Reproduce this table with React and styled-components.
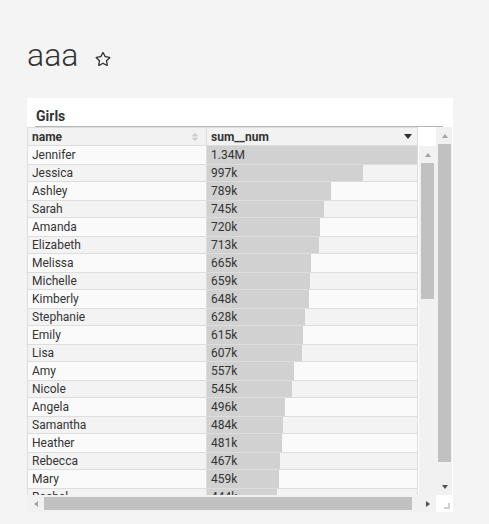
import React from 'react';
import styled, { createGlobalStyle } from 'styled-components';
import { FaRegStar, FaSort } from 'react-icons/fa';

const GlobalStyle = createGlobalStyle`
  body {
    margin: 0;
    background: #f4f4f4;
    font-family: Roboto, "Liberation Sans", sans-serif;
    color: #333;
  }
  * { box-sizing: border-box; }
`;

const Page = styled.div`
  padding: 39px 0 12px 27px;
`;

const TitleRow = styled.div`
  display: flex;
  align-items: center;
  gap: 17px;
  height: 32px;
`;

const Title = styled.h1`
  margin: 0;
  font-size: 32px;
  font-weight: 300;
  line-height: 32px;
  color: #333;
`;

const StarButton = styled.span`
  display: flex;
  margin-top: 8px;
  color: #333;
`;

const Panel = styled.div`
  margin-top: 27px;
  width: 426px;
  background: #fff;
`;

const PanelHeader = styled.div`
  margin: 0 10px 0 8px;
  padding: 10px 0 2px 1px;
  font-size: 14px;
  font-weight: 700;
  line-height: 16px;
  border-bottom: 1px solid #b5b5b5;
`;

const Grid = styled.div`
  display: grid;
  grid-template-columns: 409px 16px;
  grid-template-rows: 368px 17px;
`;

const Content = styled.div`
  display: flex;
  flex-direction: column;
  overflow: hidden;
`;

const HeaderRow = styled.div`
  display: flex;
  height: 19px;
  flex: none;
`;

const HeadCell = styled.div`
  width: ${p => p.$width}px;
  display: flex;
  align-items: center;
  justify-content: space-between;
  padding: 0 6px 0 4px;
  background: #f2f2f2;
  border: 1px solid #ddd;
  border-left-width: ${p => (p.$first ? 1 : 0)}px;
  font-size: 12px;
  font-weight: 700;
  line-height: 16px;
`;

const SortIcon = styled(FaSort)`
  color: #ccc;
  font-size: 10px;
`;

const DropArrow = styled.span`
  width: 0;
  height: 0;
  margin-right: -1px;
  border-left: 4px solid transparent;
  border-right: 4px solid transparent;
  border-top: 5px solid #333;
`;

const Body = styled.div`
  flex: 1;
  display: flex;
  overflow: hidden;
`;

const Rows = styled.div`
  width: 392px;
  display: flex;
  flex-direction: column;
`;

const Row = styled.div`
  display: flex;
  width: 391px;
  height: 18px;
  flex: none;
  background: ${p => (p.$boxed ? '#f3f3f3' : '#fafafa')};
  border-top: ${p => (p.$boxed ? '1px solid #ddd' : 'none')};
  border-bottom: ${p => (p.$boxed ? '1px solid #ddd' : 'none')};
`;

const NameCell = styled.div`
  width: 180px;
  padding-left: 4px;
  border-left: 1px solid #ddd;
  border-right: 1px solid #ddd;
  font-size: 12px;
  line-height: 16px;
  display: flex;
  align-items: center;
`;

const ValueCell = styled.div`
  flex: 1;
  position: relative;
  border-right: 1px solid #ddd;
  display: flex;
  align-items: center;
`;

const Bar = styled.div`
  position: absolute;
  left: 0;
  top: 0;
  bottom: 0;
  background: #d1d1d1;
`;

const Value = styled.span`
  position: relative;
  padding-left: 4px;
  font-size: 12px;
  line-height: 16px;
`;

const VTrack = styled.div`
  width: ${p => p.$width}px;
  display: flex;
  flex-direction: column;
  background: #f1f1f1;
  padding: 0 ${p => p.$padRight}px 0 2px;
`;

const HTrack = styled.div`
  display: flex;
  background: #f1f1f1;
  padding: 2px 0;
`;

const ArrowBox = styled.div`
  flex: none;
  width: ${p => (p.$horizontal ? '17px' : 'auto')};
  height: ${p => (p.$horizontal ? 'auto' : '17px')};
  display: flex;
  align-items: center;
  justify-content: center;
`;

const Tri = styled.span`
  width: 0;
  height: 0;
  ${p => {
    const c = p.$active ? '#505050' : '#a3a3a3';
    if (p.$dir === 'up') return `border-left: 3.5px solid transparent; border-right: 3.5px solid transparent; border-bottom: 4px solid ${c};`;
    if (p.$dir === 'down') return `border-left: 3.5px solid transparent; border-right: 3.5px solid transparent; border-top: 4px solid ${c};`;
    if (p.$dir === 'left') return `border-top: 3.5px solid transparent; border-bottom: 3.5px solid transparent; border-right: 4px solid ${c};`;
    return `border-top: 3.5px solid transparent; border-bottom: 3.5px solid transparent; border-left: 4px solid ${c};`;
  }}
`;

const VThumb = styled.div`
  height: ${p => p.$size}px;
  flex: none;
  background: #c1c1c1;
`;

const HThumb = styled.div`
  width: ${p => p.$size}px;
  flex: none;
  background: #c1c1c1;
`;

const Spacer = styled.div`
  flex: 1;
`;

const Corner = styled.div`
  background: #fff;
  display: flex;
  align-items: flex-end;
  justify-content: flex-end;
  padding: 0 2px 3px 0;
`;

const Grip = styled.span`
  width: 6px;
  height: 6px;
  border-right: 2px solid #d0d0d0;
  border-bottom: 2px solid #d0d0d0;
`;

const girls = [
  ['Jennifer', 1340, '1.34M'],
  ['Jessica', 997],
  ['Ashley', 789],
  ['Sarah', 745],
  ['Amanda', 720],
  ['Elizabeth', 713],
  ['Melissa', 665],
  ['Michelle', 659],
  ['Kimberly', 648],
  ['Stephanie', 628],
  ['Emily', 615],
  ['Lisa', 607],
  ['Amy', 557],
  ['Nicole', 545],
  ['Angela', 496],
  ['Samantha', 484],
  ['Heather', 481],
  ['Rebecca', 467],
  ['Mary', 459],
  ['Rachel', 444],
];

const max = 1340;

export default function App() {
  return (
    <Page>
      <GlobalStyle />
      <TitleRow>
        <Title>aaa</Title>
        <StarButton><FaRegStar size={16} /></StarButton>
      </TitleRow>
      <Panel>
        <PanelHeader>Girls</PanelHeader>
        <Grid>
          <Content>
            <HeaderRow>
              <HeadCell $width={180} $first>name <SortIcon /></HeadCell>
              <HeadCell $width={211}>sum__num <DropArrow /></HeadCell>
            </HeaderRow>
            <Body>
              <Rows>
                {girls.map(([name, v, label], i) => (
                  <Row key={name} $boxed={i % 2 === 1}>
                    <NameCell>{name}</NameCell>
                    <ValueCell>
                      <Bar style={{ width: `${(v / max) * 100}%` }} />
                      <Value>{label || `${v}k`}</Value>
                    </ValueCell>
                  </Row>
                ))}
              </Rows>
              <VTrack $width={17} $padRight={2}>
                <ArrowBox><Tri $dir="up" /></ArrowBox>
                <VThumb $size={136} />
              </VTrack>
            </Body>
          </Content>
          <VTrack $width={16} $padRight={1}>
            <ArrowBox><Tri $dir="up" /></ArrowBox>
            <VThumb $size={318} />
            <Spacer />
            <ArrowBox><Tri $dir="down" $active /></ArrowBox>
          </VTrack>
          <HTrack>
            <ArrowBox $horizontal><Tri $dir="left" /></ArrowBox>
            <HThumb $size={368} />
            <Spacer />
            <ArrowBox $horizontal><Tri $dir="right" $active /></ArrowBox>
          </HTrack>
          <Corner><Grip /></Corner>
        </Grid>
      </Panel>
    </Page>
  );
}
